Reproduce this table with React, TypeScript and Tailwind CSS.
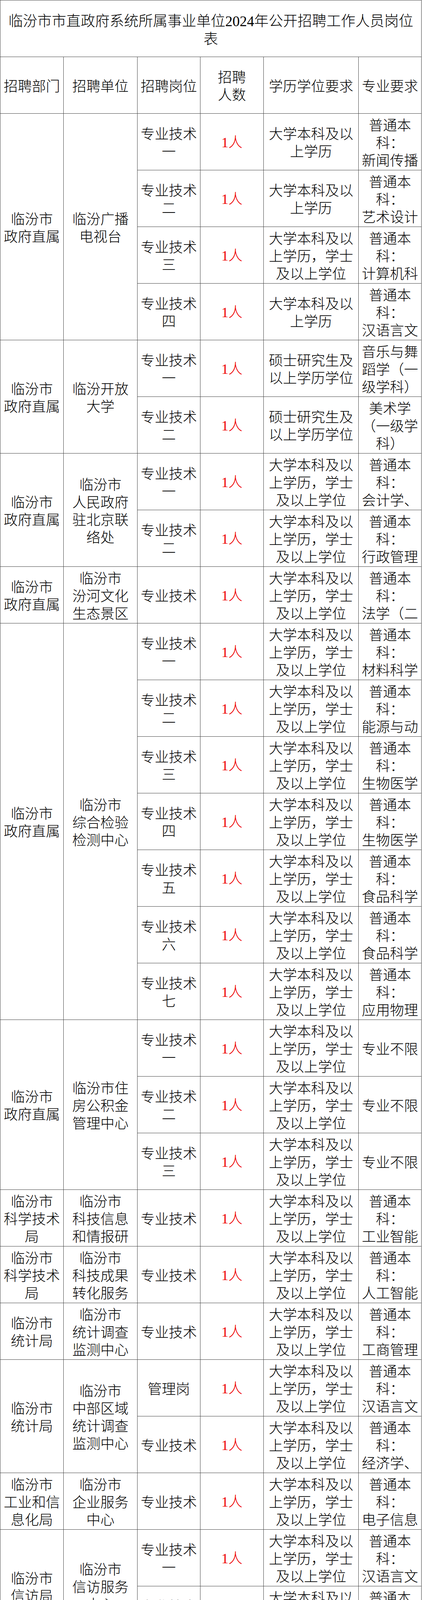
import React from "react";

type Line = React.ReactNode;
type Row = { post: Line[]; edu: Line[]; major: Line[]; mark?: boolean };
type Group = { dept: Line[]; unit: Line[]; unitTop?: boolean; rows: Row[] };

const spanClass: Record<number, string> = {
  1: "row-span-1",
  2: "row-span-2",
  3: "row-span-3",
  4: "row-span-4",
  7: "row-span-7",
};

// 学历要求
const BK = ["大学本科及以", "上学历"];
const BX = ["大学本科及以", "上学历，学士", "及以上学位"];
const SS = ["硕士研究生及", "以上学历学位"];

const pt = (m: string) => ["普通本", "科：", m];
const tech = (n?: string) => (n ? ["专业技术", n] : ["专业技术"]);
const GL = ["管理岗"];
const ZF = ["临汾市", "政府直属"];

const groups: Group[] = [
  {
    dept: ZF,
    unit: ["临汾广播", "电视台"],
    rows: [
      { post: tech("一"), edu: BK, major: pt("新闻传播") },
      { post: tech("二"), edu: BK, major: pt("艺术设计") },
      { post: tech("三"), edu: BX, major: pt("计算机科") },
      { post: tech("四"), edu: BK, major: pt("汉语言文") },
    ],
  },
  {
    dept: ZF,
    unit: ["临汾开放", "大学"],
    rows: [
      { post: tech("一"), edu: SS, major: ["音乐与舞", "蹈学（一", "级学科）"] },
      { post: tech("二"), edu: SS, major: ["美术学", "（一级学", "科）"] },
    ],
  },
  {
    dept: ZF,
    unit: ["临汾市", "人民政府", "驻北京联", "络处"],
    rows: [
      { post: tech("一"), edu: BX, major: pt("会计学、") },
      { post: tech("二"), edu: BX, major: pt("行政管理") },
    ],
  },
  {
    dept: ZF,
    unit: ["临汾市", "汾河文化", "生态景区"],
    rows: [{ post: tech(), edu: BX, major: pt("法学（二") }],
  },
  {
    dept: ZF,
    unit: ["临汾市", "综合检验", "检测中心"],
    rows: [
      { post: tech("一"), edu: BX, major: pt("材料科学") },
      { post: tech("二"), edu: BX, major: pt("能源与动") },
      { post: tech("三"), edu: BX, major: pt("生物医学") },
      { post: tech("四"), edu: BX, major: pt("生物医学") },
      { post: tech("五"), edu: BX, major: pt("食品科学") },
      { post: tech("六"), edu: BX, major: pt("食品科学") },
      { post: tech("七"), edu: BX, major: pt("应用物理") },
    ],
  },
  {
    dept: ZF,
    unit: ["临汾市住", "房公积金", "管理中心"],
    rows: [
      { post: tech("一"), edu: BX, major: ["专业不限"] },
      { post: tech("二"), edu: BX, major: ["专业不限"] },
      { post: tech("三"), edu: BX, major: ["专业不限"] },
    ],
  },
  {
    dept: ["临汾市", "科学技术", "局"],
    unit: ["临汾市", "科技信息", "和情报研"],
    rows: [{ post: tech(), edu: BX, major: pt("工业智能") }],
  },
  {
    dept: ["临汾市", "科学技术", "局"],
    unit: ["临汾市", "科技成果", "转化服务"],
    rows: [{ post: tech(), edu: BX, major: pt("人工智能") }],
  },
  {
    dept: ["临汾市", "统计局"],
    unit: ["临汾市", "统计调查", "监测中心"],
    rows: [{ post: tech(), edu: BX, major: pt("工商管理") }],
  },
  {
    dept: ["临汾市", "统计局"],
    unit: ["临汾市", "中部区域", "统计调查", "监测中心"],
    rows: [
      { post: GL, edu: BX, major: pt("汉语言文") },
      { post: tech(), edu: BX, major: pt("经济学、") },
    ],
  },
  {
    dept: ["临汾市", "工业和信", "息化局"],
    unit: ["临汾市", "企业服务", "中心"],
    rows: [{ post: tech(), edu: BX, major: pt("电子信息") }],
  },
  {
    dept: ["临汾市", "信访局"],
    unit: ["临汾市", "信访服务", "中心"],
    rows: [
      { post: tech("一"), edu: BX, major: pt("汉语言文") },
      { post: tech("二"), edu: BX, major: pt("社会学、") },
    ],
  },
  {
    dept: ["临汾市", "民政局"],
    unit: ["临汾市", "社会福利", "院（临汾", "市", "儿童福利", "院、临汾", "市"],
    unitTop: true,
    rows: [
      { post: GL, edu: BX, major: pt("计算机科") },
      { post: tech(), edu: BX, major: pt("特殊教育") },
    ],
  },
  {
    dept: ["临汾市", "民政局"],
    unit: ["临汾市", "未成年人", "保护和社"],
    rows: [{ post: tech(), edu: BX, major: pt("会计学、") }],
  },
  {
    dept: ["临汾市", "人力资源", "和社会保", "障局"],
    unit: ["临汾市", "社会保险", "中心"],
    rows: [
      { post: tech("一"), edu: BX, major: pt("计算机科") },
      { post: tech("二"), edu: BX, major: pt("会计学、") },
      { post: tech("三"), edu: BX, major: pt("会计学、") },
    ],
  },
  {
    dept: ["临汾市", "人力资源", "和社会保", "障局"],
    unit: ["临汾高级", "技工学校"],
    rows: [
      { post: tech("一"), edu: BX, major: pt("机械设计") },
      { post: tech("二"), edu: SS, major: ["数学（一", "级学科）", "学科教学"] },
      { post: tech("三"), edu: SS, major: ["中国史", "（一级学", "科）"], mark: true },
    ],
  },
  {
    dept: ["临汾市", "退役军人", "事务局"],
    unit: ["临汾市", "退役军人", "服务中心"],
    rows: [{ post: GL, edu: BX, major: pt("新闻传播") }],
  },
];

interface CellProps {
  lines: Line[];
  span?: number;
  red?: boolean;
  top?: boolean;
  children?: React.ReactNode;
}

function Cell({ lines, span = 1, red, top, children }: CellProps) {
  return (
    <div
      className={`${spanClass[span]} relative flex flex-col items-center ${
        top ? "justify-start pt-[5px]" : "justify-center"
      } overflow-hidden border-r border-b border-[#444] text-center leading-[45px] ${
        red ? "text-[#ee0000]" : "text-black"
      }`}
    >
      {lines.map((l, i) => (
        <div key={i} className="whitespace-nowrap">
          {l}
        </div>
      ))}
      {children}
    </div>
  );
}

const num = (s: string) => <span className="font-['Liberation_Serif',serif]">{s}</span>;

export default function App() {
  return (
    <div className="w-[1080px] bg-white font-['Noto_Sans_CJK_SC','Liberation_Serif',sans-serif] text-[36px] font-light">
      <div className="grid w-[1079px] grid-cols-[162px_189px_161px_162px_243px_161px] auto-rows-[145px] border-l border-t border-[#444]">
        <div className="col-span-6 flex flex-col items-center justify-center border-r border-b border-[#444] pt-[3px] text-center text-[37px] leading-[43px] text-black">
          <div className="whitespace-nowrap">
            临汾市市直政府系统所属事业单位{num("2024")}年公开招聘工作人员岗位
          </div>
          <div>表</div>
        </div>

        <Cell lines={["招聘部门"]} />
        <Cell lines={["招聘单位"]} />
        <Cell lines={["招聘岗位"]} />
        <Cell lines={["招聘", "人数"]} />
        <Cell lines={["学历学位要求"]} />
        <Cell lines={["专业要求"]} />

        {groups.map((g, gi) => (
          <React.Fragment key={gi}>
            <Cell lines={g.dept} span={g.rows.length} />
            <Cell lines={g.unit} span={g.rows.length} top={g.unitTop} />
            {g.rows.map((r, ri) => (
              <React.Fragment key={ri}>
                <Cell lines={r.post}>
                  {r.mark && (
                    <span className="absolute left-0 top-0 h-0 w-0 border-t-[5px] border-r-[5px] border-t-[#1a9a1a] border-r-transparent" />
                  )}
                </Cell>
                <Cell lines={[<>{num("1")}人</>]} red />
                <Cell lines={r.edu} />
                <Cell lines={r.major} />
              </React.Fragment>
            ))}
          </React.Fragment>
        ))}
      </div>
    </div>
  );
}
